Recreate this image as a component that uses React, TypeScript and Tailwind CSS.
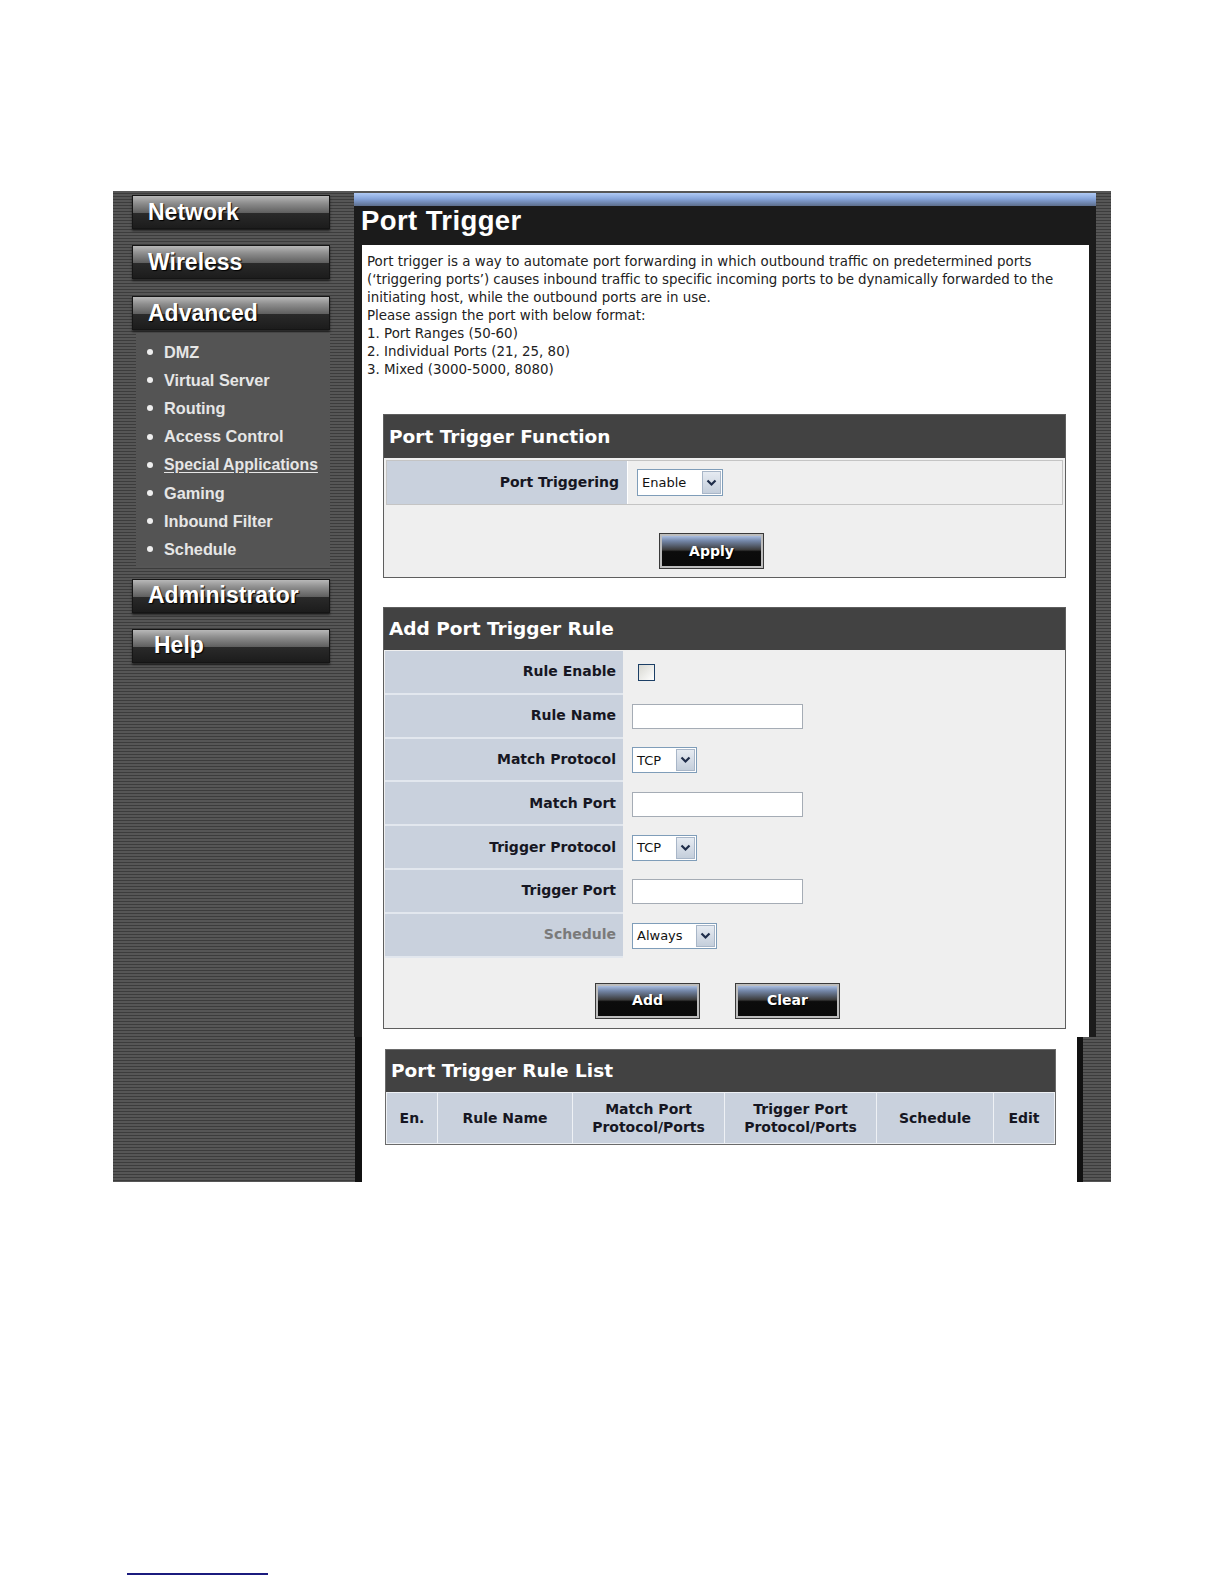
import React from "react"

// ── Shared styles ──────────────────────────────────────────────────────────
const stripes =
  "bg-[#484848] bg-[image:repeating-linear-gradient(180deg,#565656_0px,#565656_2px,#3c3c3c_2px,#3c3c3c_3px)]"
const tahoma = "font-['DejaVu_Sans','Noto_Sans',sans-serif]"
const arial = "font-['Liberation_Sans',Arial,sans-serif]"

function NavButton({ label, indent = false }: { label: string; indent?: boolean }) {
  return (
    <div
      className={`ml-[19px] flex h-[34px] w-[198px] items-center border border-[#151515] bg-[image:linear-gradient(180deg,#b8b8b8_0%,#8e8e8e_22%,#606060_52%,#2a2a2a_53%,#1c1c1c_100%)] shadow-[0_2px_2px_rgba(0,0,0,0.55)] ${
        indent ? "pl-[21px]" : "pl-[15px]"
      } ${arial} text-[23px] font-bold leading-none text-white [text-shadow:1px_1px_1px_#000]`}
    >
      {label}
    </div>
  )
}

const subItems = [
  "DMZ",
  "Virtual Server",
  "Routing",
  "Access Control",
  "Special Applications",
  "Gaming",
  "Inbound Filter",
  "Schedule",
]

function Sidebar() {
  return (
    <div className={`flex h-[991px] w-[241px] flex-col pt-[4px] ${stripes}`}>
      <NavButton label="Network" />
      <div className="h-[16px]" />
      <NavButton label="Wireless" />
      <div className="h-[17px]" />
      <NavButton label="Advanced" />
      <div className={`ml-[23px] mt-[3px] w-[194px] bg-[#545454] pb-[2px] pt-[5px] ${arial}`}>
        {subItems.map((item) => (
          <div key={item} className="flex h-[28.2px] items-center pl-[11px]">
            <span className="mr-[11px] h-[6px] w-[6px] rounded-full bg-[#eeeeee]" />
            <span
              className={`font-bold text-[#e6e6e6] ${
                item === "Special Applications" ? "text-[15.8px] underline underline-offset-2" : "text-[16.3px]"
              }`}
            >
              {item}
            </span>
          </div>
        ))}
      </div>
      <div className="h-[13px]" />
      <NavButton label="Administrator" />
      <div className="h-[16px]" />
      <NavButton label="Help" indent />
    </div>
  )
}

// ── Form bits ──────────────────────────────────────────────────────────────
function Chevron() {
  return (
    <svg width="11" height="8" viewBox="0 0 11 8">
      <polyline points="1.5,1.5 5.5,5.5 9.5,1.5" fill="none" stroke="#1f2d4a" strokeWidth="2.2" />
    </svg>
  )
}

function Select({ value, className }: { value: string; className: string }) {
  return (
    <div className={`flex items-stretch border border-[#7f9db9] bg-white ${className}`}>
      <span className="flex flex-1 items-center pl-[4px] text-[13px] text-[#111]">{value}</span>
      <span className="m-[1px] flex w-[19px] items-center justify-center border border-[#a8b6c8] bg-[image:linear-gradient(180deg,#e6ebf2,#c4cedb)]">
        <Chevron />
      </span>
    </div>
  )
}

function TextInput() {
  return <div className="h-[25px] w-[171px] border border-[#a5acb5] bg-white" />
}

function Checkbox() {
  return (
    <div className="ml-[6px] h-[17px] w-[17px] border border-[#1c3f66] bg-[image:linear-gradient(135deg,#d8d8d2,#ffffff)]" />
  )
}

function DarkButton({ label }: { label: string }) {
  return (
    <div className="flex h-[34px] w-[103px] items-center justify-center border-2 border-[#bdbdbd] bg-[image:linear-gradient(180deg,#a9bde0_0%,#7487a8_16%,#3c3c3c_46%,#0c0c0c_52%,#0a0a0a_100%)] shadow-[0_0_0_1px_#3a3a3a] text-[14px] font-bold text-white [text-shadow:1px_1px_1px_#000]">
      {label}
    </div>
  )
}

function BoxHeader({ title, tall = false }: { title: string; tall?: boolean }) {
  return (
    <div
      className={`flex ${tall ? "h-[43px]" : "h-[42px]"} items-center bg-[#424242] pl-[5px] text-[18.5px] font-bold text-white`}
    >
      {title}
    </div>
  )
}

interface Row {
  label: string
  muted?: boolean
  field: React.ReactNode
}

const ruleRows: Row[] = [
  { label: "Rule Enable", field: <Checkbox /> },
  { label: "Rule Name", field: <TextInput /> },
  { label: "Match Protocol", field: <Select value="TCP" className="h-[26px] w-[65px]" /> },
  { label: "Match Port", field: <TextInput /> },
  { label: "Trigger Protocol", field: <Select value="TCP" className="h-[26px] w-[65px]" /> },
  { label: "Trigger Port", field: <TextInput /> },
  { label: "Schedule", muted: true, field: <Select value="Always" className="h-[26px] w-[85px]" /> },
]

const listCols = [
  { w: "w-[50px]", label: ["En."] },
  { w: "w-[134px]", label: ["Rule Name"] },
  { w: "w-[151px]", label: ["Match Port", "Protocol/Ports"] },
  { w: "w-[151px]", label: ["Trigger Port", "Protocol/Ports"] },
  { w: "w-[116px]", label: ["Schedule"] },
  { w: "w-[60px]", label: ["Edit"] },
]

// ── Main panel ─────────────────────────────────────────────────────────────
function MainPanel() {
  return (
    <div className="flex w-[757px] flex-col">
      {/* top: title + content */}
      <div className="flex h-[846px]">
        <div className="flex w-[742px] flex-col bg-[#1b1b1b]">
          <div className={`h-[2px] ${stripes}`} />
          <div className="h-[13px] bg-[image:linear-gradient(180deg,#b0caf5_0%,#86a4da_45%,#5d6e8c_100%)]" />
          <div
            className={`h-[39px] pl-[7px] pt-[1px] ${arial} text-[27.5px] font-bold leading-[27px] tracking-[0.4px] text-white`}
          >
            Port Trigger
          </div>
          <div className="ml-[8px] mr-[7px] flex-1 bg-white">
            <p className={`whitespace-nowrap pl-[5px] pt-[8px] ${tahoma} text-[13.4px] leading-[18px] text-[#222]`}>
              Port trigger is a way to automate port forwarding in which outbound traffic on predetermined ports
              <br />
              <span className="tracking-[-0.07px]">
                (‘triggering ports’) causes inbound traffic to specific incoming ports to be dynamically forwarded to the
              </span>
              <br />
              initiating host, while the outbound ports are in use.
              <br />
              Please assign the port with below format:
              <br />
              1. Port Ranges (50-60)
              <br />
              2. Individual Ports (21, 25, 80)
              <br />
              3. Mixed (3000-5000, 8080)
            </p>

            {/* Port Trigger Function */}
            <div className={`ml-[21px] mt-[35px] w-[683px] border border-[#5e5e5e] bg-[#efefef] ${tahoma}`}>
              <BoxHeader title="Port Trigger Function" tall />
              <div className="px-[2px] pt-[2px]">
                <div className="flex h-[45px] border border-[#c4c4c4] bg-white">
                  <div className="flex w-[240px] items-center justify-end bg-[#c9d1dd] pr-[8px] text-[14px] font-bold text-[#161622]">
                    Port Triggering
                  </div>
                  <div className="ml-[1px] flex flex-1 items-center bg-[#efefef] pl-[9px]">
                    <Select value="Enable" className="h-[27px] w-[86px]" />
                  </div>
                </div>
              </div>
              <div className="flex h-[72px] pl-[276px] pt-[29px]">
                <DarkButton label="Apply" />
              </div>
            </div>

            {/* Add Port Trigger Rule */}
            <div className={`ml-[21px] mt-[29px] w-[683px] border border-[#5e5e5e] bg-[#efefef] ${tahoma}`}>
              <BoxHeader title="Add Port Trigger Rule" />
              <div className="pl-[1px] pt-[1px]">
                {ruleRows.map((r) => (
                  <div key={r.label} className="flex h-[43.8px]">
                    <div
                      className={`flex w-[238px] items-center justify-end border-b-2 border-[#e2e7ee] bg-[#c9d1dd] pr-[7px] text-[14px] font-bold ${
                        r.muted ? "text-[#7a7a7a]" : "text-[#161622]"
                      }`}
                    >
                      {r.label}
                    </div>
                    <div className="flex flex-1 items-center pl-[9px]">{r.field}</div>
                  </div>
                ))}
              </div>
              <div className="flex h-[70px] gap-[37px] pl-[212px] pt-[26px]">
                <DarkButton label="Add" />
                <DarkButton label="Clear" />
              </div>
            </div>
          </div>
        </div>
        <div className={`w-[15px] ${stripes}`} />
      </div>

      {/* bottom: rule list */}
      <div className="flex h-[145px]">
        <div className={`w-[1px] ${stripes}`} />
        <div className="w-[7px] bg-[#111]" />
        <div className="w-[715px] bg-white pt-[12px]">
          <div className={`ml-[23px] w-[671px] border border-[#6a6a6a] ${tahoma}`}>
            <BoxHeader title="Port Trigger Rule List" />
            <div className="flex gap-[1px] bg-[#eef1f5] p-[1px]">
              {listCols.map((c) => (
                <div
                  key={c.label.join()}
                  className={`flex h-[50px] ${c.w} flex-col items-center justify-center bg-[#c9d1dd] text-center text-[14px] font-bold leading-[18px] text-[#161622]`}
                >
                  {c.label.map((l) => (
                    <span key={l}>{l}</span>
                  ))}
                </div>
              ))}
            </div>
          </div>
        </div>
        <div className="w-[6px] bg-[#111]" />
        <div className={`w-[28px] ${stripes}`} />
      </div>
    </div>
  )
}

export default function App() {
  return (
    <div className="min-h-[1584px] bg-white">
      <div className="pl-[113px] pt-[191px]">
        <div className="flex h-[991px] w-[998px]">
          <Sidebar />
          <MainPanel />
        </div>
      </div>
      <div className="ml-[127px] mt-[391px] h-[2px] w-[141px] bg-[#1b1b7e]" />
    </div>
  )
}
